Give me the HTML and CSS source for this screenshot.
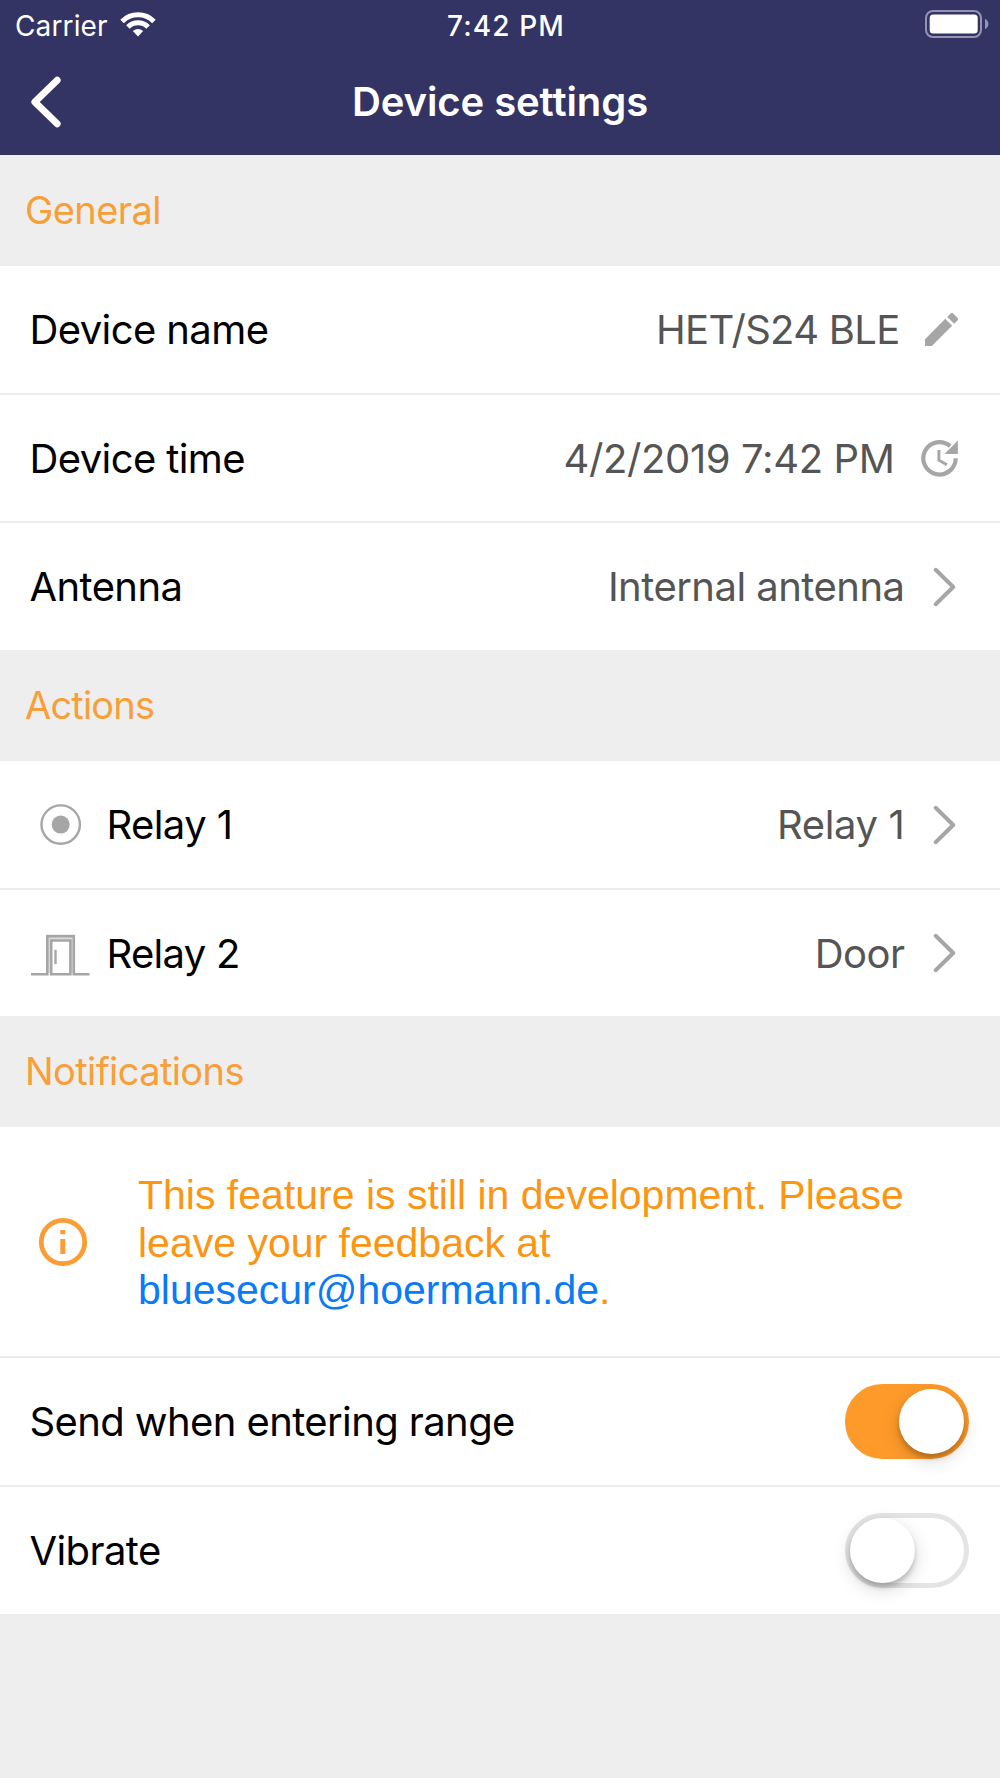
FILE: index.html
```html
<!DOCTYPE html>
<html lang="en">
<head>
<meta charset="utf-8">
<meta name="viewport" content="width=device-width">
<title>Device settings</title>
<link rel="stylesheet" href="styles.css">
</head>
<body>
<svg class="defs" aria-hidden="true">
  <symbol id="chevron" viewBox="0 0 28 40"><path d="M5.7 2.8 23.2 20 5.7 37.2" fill="none" stroke="#a6a6a6" stroke-width="4" stroke-linecap="round" stroke-linejoin="round"/></symbol>
</svg>

<header class="header">
  <div class="status">
    <div class="status-left">
      <span class="carrier">Carrier</span>
      <svg class="wifi" width="36" height="26" viewBox="0 0 36 26" fill="none" stroke="#fff" stroke-width="5">
        <path d="M2.1 10.4a22.5 22.5 0 0 1 31.8 0"/>
        <path d="M7.9 16a14.3 14.3 0 0 1 20.2 0"/>
        <path d="M18 25.4l-5.2-5.3q5.2-4 10.4 0z" fill="#fff" stroke="none"/>
      </svg>
    </div>
    <span class="time">7:42 PM</span>
    <svg class="battery" width="64" height="28" viewBox="0 0 64 28">
      <rect x="1" y="1" width="55" height="26" rx="7" fill="none" stroke="#9393b4" stroke-width="2"/>
      <rect x="4.7" y="4.5" width="48" height="19" rx="3.5" fill="#fff"/>
      <path d="M60 8.7q3.4 1.8 3.4 5.3t-3.4 5.3z" fill="#9393b4"/>
    </svg>
  </div>
  <div class="nav">
    <a class="back" href="#" aria-label="Back">
      <svg width="32" height="52" viewBox="0 0 32 52"><path d="M27.2 4.2 4.8 26l22.4 21.8" fill="none" stroke="#fff" stroke-width="6.8" stroke-linecap="round" stroke-linejoin="round"/></svg>
    </a>
    <h1 class="title">Device settings</h1>
  </div>
</header>

<main>
  <section>
    <h2 class="section-title">General</h2>
    <div class="row">
      <span class="label">Device name</span>
      <span class="value tight">HET/S24 BLE</span>
      <svg width="33" height="33" viewBox="3 3 18 18"><path fill="#a6a6a6" d="M3 17.25V21h3.75L17.81 9.94l-3.75-3.75L3 17.25zM20.71 7.04a1 1 0 0 0 0-1.41l-2.34-2.34a1 1 0 0 0-1.41 0l-1.83 1.83 3.75 3.75 1.83-1.83z"/></svg>
    </div>
    <div class="row middle">
      <span class="label">Device time</span>
      <span class="value numeric">4/2/2019 7:42 PM</span>
      <svg width="38" height="40" viewBox="0 0 38 40" fill="none" stroke="#a6a6a6">
        <path d="M35.7 20.3A16.2 16.2 0 1 1 30.2 8.1" stroke-width="4.2"/>
        <path d="M37.9 2.5v13.4H24.5z" fill="#a6a6a6" stroke="none"/>
        <path d="M18.9 12v10.2l8 4.6" stroke-width="2.9"/>
      </svg>
    </div>
    <div class="row last">
      <span class="label">Antenna</span>
      <span class="value">Internal antenna</span>
      <svg width="28" height="40"><use href="#chevron"/></svg>
    </div>
  </section>

  <section>
    <h2 class="section-title tight">Actions</h2>
    <div class="row">
      <svg class="lead" width="60" height="42" viewBox="0 0 60 42">
        <circle cx="30.7" cy="20.6" r="19.2" fill="none" stroke="#a6a6a6" stroke-width="2.4"/>
        <circle cx="30.7" cy="20.6" r="9" fill="#a6a6a6"/>
      </svg>
      <span class="label">Relay 1</span>
      <span class="value numeric">Relay 1</span>
      <svg width="28" height="40"><use href="#chevron"/></svg>
    </div>
    <div class="row last short">
      <svg class="lead" width="60" height="42" viewBox="0 0 60 42" fill="none" stroke="#a6a6a6" stroke-width="2.6">
        <path d="M16 41V2.5h29V41" fill="#dcdcdc" stroke="none"/>
        <path d="M1 42.3h16.3V4.200h26.5v38.100H59.5"/>
        <path d="M21.2 8.5h19.2v33.800H21.2z" fill="#fff"/>
        <path d="M25.5 17.800v14.300" stroke-width="2.4"/>
      </svg>
      <span class="label tight">Relay 2</span>
      <span class="value">Door</span>
      <svg width="28" height="40"><use href="#chevron"/></svg>
    </div>
  </section>

  <section>
    <h2 class="section-title">Notifications</h2>
    <div class="info">
      <svg width="50" height="50" viewBox="0 0 50 50">
        <circle cx="25" cy="25" r="21.7" fill="none" stroke="#fb9d35" stroke-width="4.8"/>
        <path d="M22.300 13h5v4.200h-5zM22.300 22h5v15h-5z" fill="#fb9d35"/>
      </svg>
      <p class="info-text">This feature is still in development. Please leave your feedback at <a class="link" href="mailto:bluesecur@hoermann.de">bluesecur@hoermann.de</a>.</p>
    </div>
    <div class="row">
      <span class="label">Send when entering range</span>
      <span class="switch on"><span class="thumb"></span></span>
    </div>
    <div class="row last">
      <span class="label">Vibrate</span>
      <span class="switch"><span class="thumb"></span></span>
    </div>
  </section>
</main>
</body>
</html>
```
FILE: styles.css
```css
* { box-sizing: border-box; }

body {
  margin: 0;
  min-height: 1778px;
  background: #eee;
  color: #000;
  font-family: Inter, "Liberation Sans", sans-serif;
}

svg { flex: none; display: block; }
.defs { display: none; }

.header {
  height: 155px;
  background: #333364;
  color: #fff;
}

.status {
  display: grid;
  grid-template-columns: 1fr auto 1fr;
  align-items: center;
  height: 51px;
  padding: 0 11px 0 15px;
  font-size: 28px;
}

.status-left { display: flex; align-items: center; gap: 12px; }
.carrier { letter-spacing: 0.13px; }
.wifi { margin-top: -4px; }
.time { margin-left: 8px; font-weight: 500; letter-spacing: 1.1px; }
.battery { justify-self: end; margin-top: -3px; }

.nav {
  display: grid;
  grid-template-columns: 1fr auto 1fr;
  align-items: center;
  height: 102px;
  padding: 0 30px;
}

.title {
  margin: 0 0 2px;
  font-size: 40px;
  font-weight: 600;
  letter-spacing: -0.08px;
}

.section-title {
  display: flex;
  align-items: center;
  height: 111px;
  margin: 0;
  padding: 0 0 2px 25px;
  color: #f79f38;
  font-size: 38px;
  font-weight: 400;
  letter-spacing: -0.6px;
}

.section-title.tight { letter-spacing: -0.8px; }

.row {
  display: flex;
  align-items: center;
  height: 129px;
  padding: 0 42px 0 29.5px;
  border-bottom: 2px solid #ececec;
  background: #fff;
  font-size: 40px;
  letter-spacing: -0.6px;
}

.row.middle { height: 128px; }
.row.last { height: 127px; border-bottom: 0; }
.row.last.short { height: 126px; }

.label { flex: 1; }
.label.tight,
.value.tight { letter-spacing: -0.72px; }

.lead { margin-right: 17px; overflow: visible; }

.value { margin-right: 25.5px; color: #555; letter-spacing: -0.52px; }
.value.numeric { letter-spacing: -0.37px; }

.info {
  display: flex;
  align-items: center;
  height: 231px;
  padding-left: 38px;
  border-bottom: 2px solid #ececec;
  background: #fff;
}

.info-text {
  width: 790px;
  margin: 4px 0 0 50px;
  color: #fb9512;
  font: 41px/47.7px "Liberation Sans", Arial, sans-serif;
}

.link { color: #0a7af5; text-decoration: none; }

.switch {
  flex: none;
  display: flex;
  width: 124px;
  height: 75px;
  margin-right: -11px;
  border: 5px solid #e4e4e4;
  border-radius: 38px;
}

.switch.on {
  justify-content: flex-end;
  border-color: #fd9a2a;
  background: #fd9a2a;
}

.thumb {
  width: 65px;
  height: 65px;
  border-radius: 50%;
  background: #fff;
  box-shadow: 0 6px 18px rgba(0, 0, 0, 0.16), 0 4px 5px rgba(0, 0, 0, 0.2);
}
```
